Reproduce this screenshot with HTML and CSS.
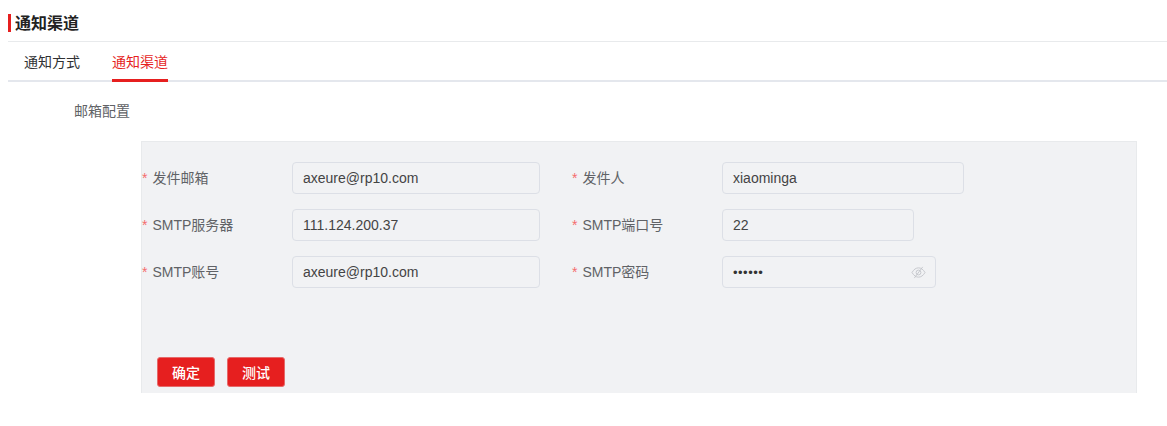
FILE: index.html
```html
<!DOCTYPE html>
<html lang="zh-CN">
<head>
<meta charset="utf-8">
<title>通知渠道</title>
<link rel="stylesheet" href="styles.css">
</head>
<body>
<main class="page">
  <header class="page-head"><h1 class="page-title">通知渠道</h1></header>
  <nav class="tabs">
    <a class="tab">通知方式</a>
    <a class="tab tab-active">通知渠道</a>
  </nav>
  <h2 class="section-title">邮箱配置</h2>
  <section class="panel">
    <div class="form-grid">
      <div class="field">
        <label class="label"><span class="req">*</span>发件邮箱</label>
        <div class="input w-main">axeure@rp10.com</div>
      </div>
      <div class="field">
        <label class="label"><span class="req">*</span>发件人</label>
        <div class="input w-sender">xiaominga</div>
      </div>
      <div class="field">
        <label class="label"><span class="req">*</span>SMTP服务器</label>
        <div class="input w-main">111.124.200.37</div>
      </div>
      <div class="field">
        <label class="label"><span class="req">*</span>SMTP端口号</label>
        <div class="input w-port">22</div>
      </div>
      <div class="field">
        <label class="label"><span class="req">*</span>SMTP账号</label>
        <div class="input w-main">axeure@rp10.com</div>
      </div>
      <div class="field">
        <label class="label"><span class="req">*</span>SMTP密码</label>
        <div class="input w-pass">
          <span class="dots">••••••</span>
          <svg class="eye" viewBox="0 0 16 14" width="15" height="13" fill="none" stroke="#c4c6cb" stroke-width="1">
            <path d="M1 7c2-3.400 4.300-5 7-5s5 1.600 7 5c-2 3.400-4.300 5-7 5s-5-1.600-7-5z"/>
            <circle cx="8" cy="7" r="2.600"/>
            <path d="M12.500 1 3.500 13"/>
          </svg>
        </div>
      </div>
    </div>
    <div class="actions">
      <button class="btn" type="button">确定</button>
      <button class="btn" type="button">测试</button>
    </div>
  </section>
</main>
</body>
</html>
```
FILE: styles.css
```css
* { box-sizing: border-box; }
html, body { margin: 0; background: #fff; }
body {
  font-family: "Liberation Sans", "Noto Sans CJK SC", sans-serif;
  font-size: 14px;
  color: #333;
}
.page { padding: 0 0 0 8px; height: 426px; overflow: hidden; }
.page-head {
  height: 42px;
  padding-top: 14px;
  border-bottom: 1px solid #e8eaec;
}
.page-title {
  margin: 0;
  height: 18px;
  border-left: 3px solid #e61f1f;
  padding-left: 4px;
  font-size: 16px;
  font-weight: 700;
  line-height: 20px;
  color: #222;
}
.tabs {
  display: flex;
  gap: 32px;
  height: 40px;
  padding-left: 16px;
  border-bottom: 2px solid #e4e7ed;
}
.tab {
  height: 40px;
  line-height: 40px;
  color: #303133;
}
.tab-active {
  color: #e61f1f;
  border-bottom: 3px solid #e61f1f;
}
.section-title {
  margin: 0;
  padding: 19px 0 0 66px;
  height: 59px;
  font-size: 14px;
  font-weight: 400;
  line-height: 20px;
  color: #606266;
}
.panel {
  display: flex;
  flex-direction: column;
  justify-content: space-between;
  margin-left: 133px;
  width: 996px;
  height: 252px;
  padding: 20px 0 6px;
  background: #f1f2f4;
  border: 1px solid #e8eaec;
  border-bottom: 0;
}
.form-grid {
  display: grid;
  grid-template-columns: 430px 1fr;
  grid-auto-rows: 32px;
  row-gap: 15px;
}
.field { display: flex; align-items: center; }
.label {
  flex: 0 0 150px;
  color: #606266;
  white-space: nowrap;
  line-height: 20px;
}
.req { color: #f56c6c; margin-right: 5px; }
.input {
  display: flex;
  align-items: center;
  justify-content: space-between;
  height: 32px;
  padding: 0 10px;
  border: 1px solid #dcdfe6;
  border-radius: 4px;
  color: #444;
}
.w-main { width: 248px; }
.w-sender { width: 242px; }
.w-port { width: 192px; }
.w-pass { width: 214px; }
.dots { font-size: 13px; letter-spacing: 0.5px; color: #333; }
.eye { display: block; margin-right: -1px; }
.actions { display: flex; gap: 12px; padding-left: 15px; }
.btn {
  width: 58px;
  height: 30px;
  padding: 0;
  background: #e61f1f;
  border: 1px solid #e66a6a;
  border-radius: 3px;
  color: #fff;
  font: 500 14px "Liberation Sans", "Noto Sans CJK SC", sans-serif;
}
```
